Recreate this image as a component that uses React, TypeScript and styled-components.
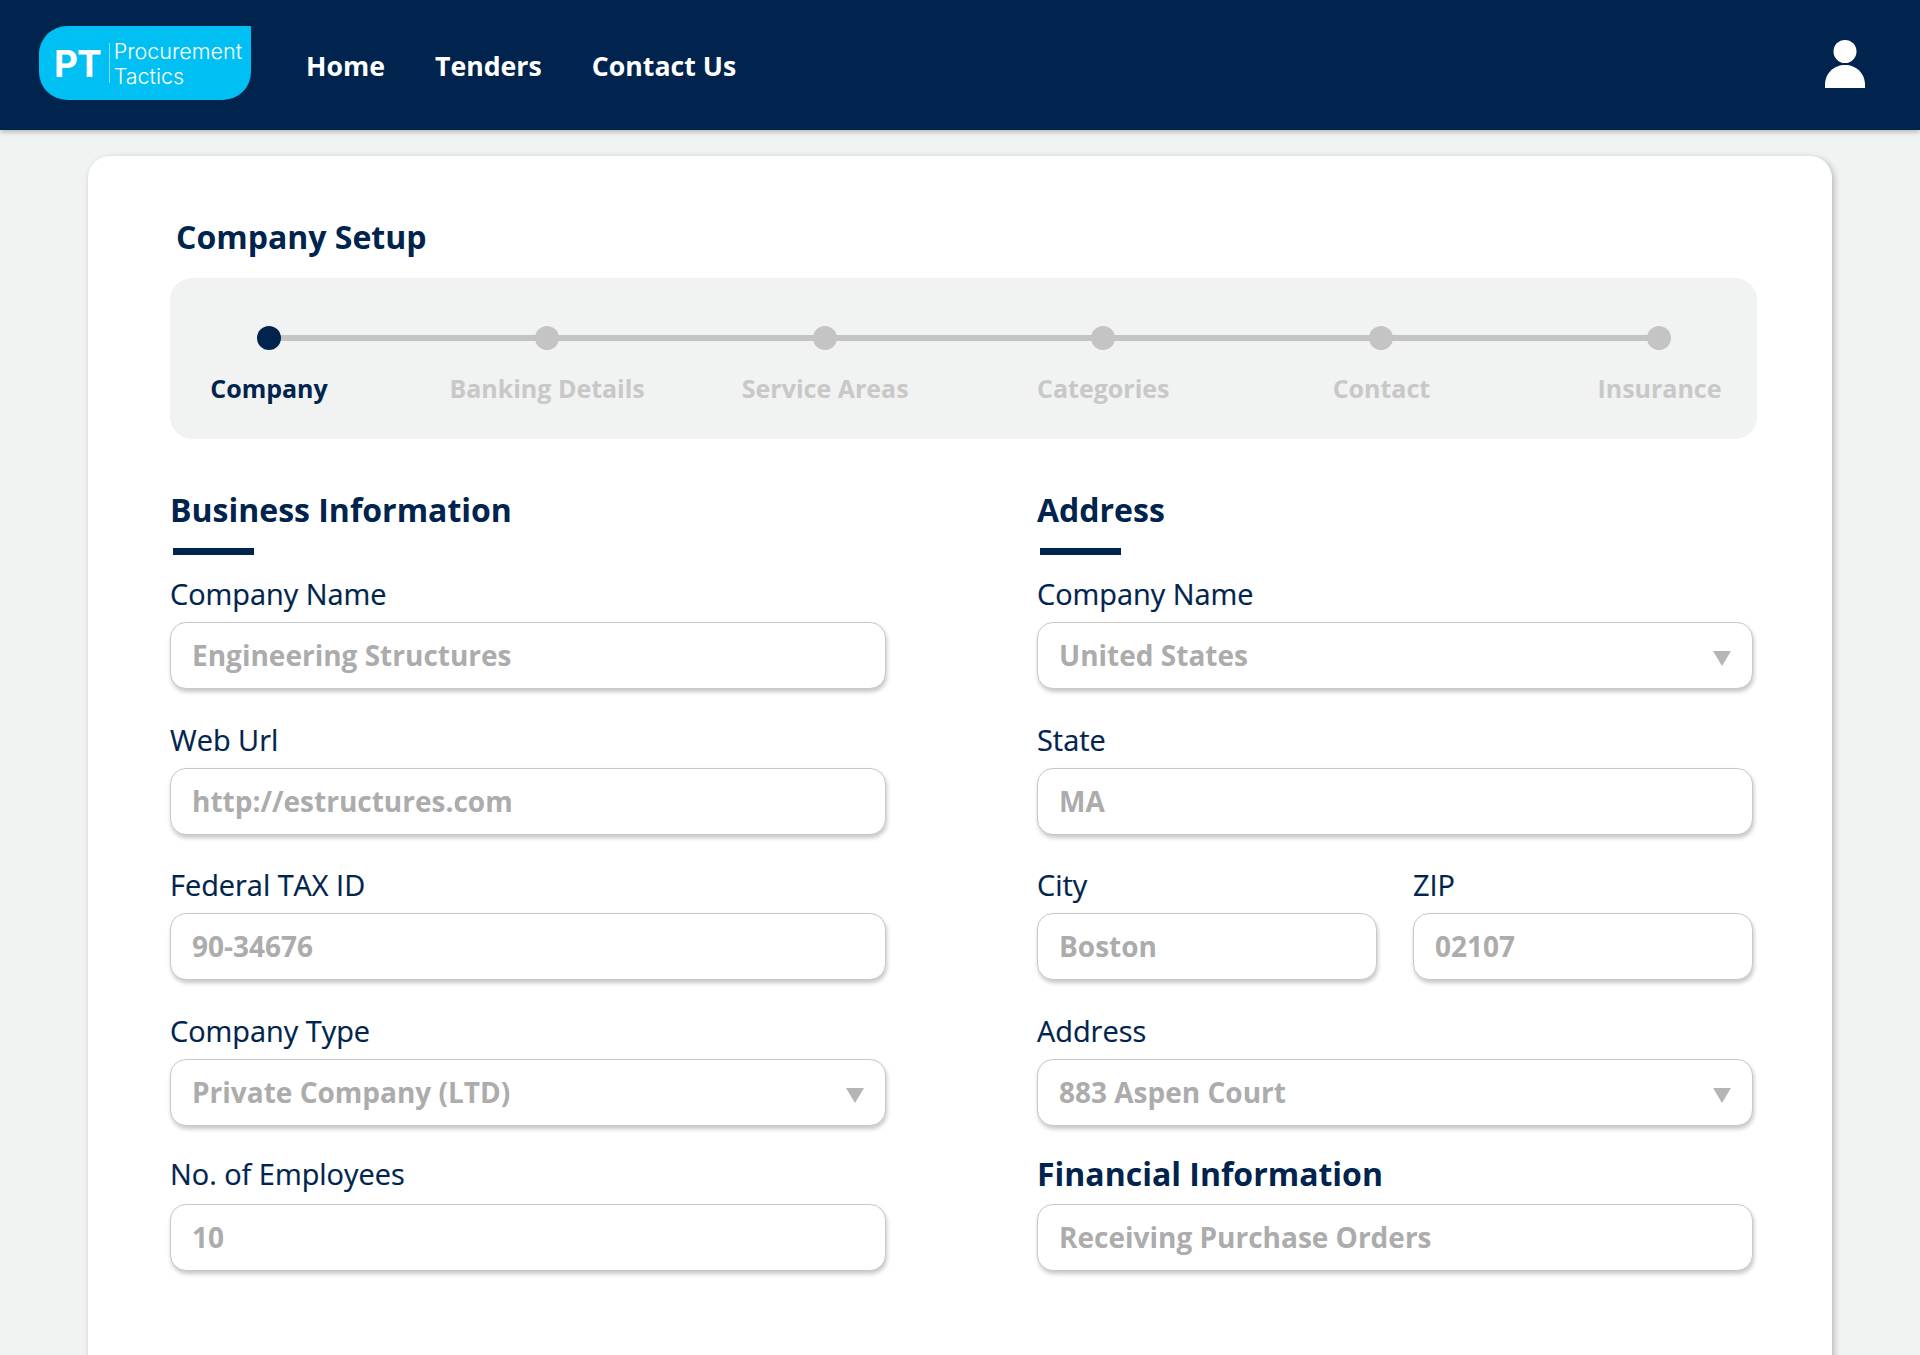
import styled, { createGlobalStyle } from "styled-components";

const NAVY = "#00244d";

const GlobalStyle = createGlobalStyle`
  * {
    box-sizing: border-box;
  }
  html, body {
    margin: 0;
    padding: 0;
    height: 100%;
    background: #f1f2f2;
    font-family: "Open Sans", "Liberation Sans", sans-serif;
  }
  #root {
    height: 1355px;
    overflow: hidden;
  }
`;

const steps = ["Company", "Banking Details", "Service Areas", "Categories", "Contact", "Insurance"];

const App = () => {
  return (
    <>
      <GlobalStyle />
      <Header>
        <Logo>
          <LogoMark>PT</LogoMark>
          <LogoDivider />
          <LogoName>
            <span>Procurement</span>
            <span>Tactics</span>
          </LogoName>
        </Logo>
        <Nav>
          <NavLink>Home</NavLink>
          <NavLink>Tenders</NavLink>
          <NavLink>Contact Us</NavLink>
        </Nav>
        <UserIcon viewBox="0 0 40 48" aria-hidden="true">
          <circle cx="20" cy="11.5" r="11.5" fill="#fff" />
          <path d="M0 48 V45 C0 33 9 25 20 25 C31 25 40 33 40 45 V48 Z" fill="#fff" />
        </UserIcon>
      </Header>
      <Card>
        <Title>Company Setup</Title>
        <StepPanel>
          <StepRow>
            {steps.map((step, i) => (
              <Step key={step}>
                <Dot active={i === 0} />
                <StepLabel active={i === 0}>{step}</StepLabel>
              </Step>
            ))}
          </StepRow>
        </StepPanel>
        <Columns>
          <Column>
            <SectionTitle>Business Information</SectionTitle>
            <SectionBar />
            <Fields>
              <Field>
                <Label>Company Name</Label>
                <InputBox>Engineering Structures</InputBox>
              </Field>
              <Field>
                <Label>Web Url</Label>
                <InputBox>http://estructures.com</InputBox>
              </Field>
              <Field>
                <Label>Federal TAX ID</Label>
                <InputBox>90-34676</InputBox>
              </Field>
              <Field>
                <Label>Company Type</Label>
                <InputBox>
                  Private Company (LTD)
                  <Caret />
                </InputBox>
              </Field>
              <Field>
                <Label tight>No. of Employees</Label>
                <InputBox>10</InputBox>
              </Field>
            </Fields>
          </Column>
          <Column>
            <SectionTitle>Address</SectionTitle>
            <SectionBar />
            <Fields>
              <Field>
                <Label>Company Name</Label>
                <InputBox>
                  United States
                  <Caret />
                </InputBox>
              </Field>
              <Field>
                <Label>State</Label>
                <InputBox>MA</InputBox>
              </Field>
              <SplitRow>
                <Field>
                  <Label>City</Label>
                  <InputBox>Boston</InputBox>
                </Field>
                <Field>
                  <Label>ZIP</Label>
                  <InputBox>02107</InputBox>
                </Field>
              </SplitRow>
              <Field>
                <Label>Address</Label>
                <InputBox>
                  883 Aspen Court
                  <Caret />
                </InputBox>
              </Field>
              <Field>
                <FieldHeading>Financial Information</FieldHeading>
                <InputBox>Receiving Purchase Orders</InputBox>
              </Field>
            </Fields>
          </Column>
        </Columns>
      </Card>
    </>
  );
};

export default App;

const Header = styled.header`
  display: flex;
  align-items: center;
  height: 130px;
  padding: 0 55px 0 39px;
  background: ${NAVY};
  box-shadow: 0 2px 5px rgba(0, 0, 0, 0.25);
  position: relative;
`;

const Logo = styled.div`
  display: flex;
  align-items: center;
  width: 212px;
  height: 74px;
  margin-top: -4px;
  padding-left: 15px;
  background: #00c0f3;
  border-radius: 28px 0 28px 28px;
  color: #fff;
`;

const LogoMark = styled.span`
  font-family: "Inter", sans-serif;
  font-size: 37px;
  font-weight: 700;
  line-height: 1;
  letter-spacing: -1px;
`;

const LogoDivider = styled.span`
  width: 1px;
  height: 40px;
  margin: 0 4px 0 8px;
  background: rgba(255, 255, 255, 0.5);
`;

const LogoName = styled.span`
  display: flex;
  flex-direction: column;
  margin-top: 2px;
  font-family: "Inter", sans-serif;
  font-size: 21.5px;
  font-weight: 300;
  line-height: 25px;
  white-space: nowrap;
`;

const Nav = styled.nav`
  display: flex;
  gap: 50px;
  margin-left: 55px;
  margin-top: 2px;
`;

const NavLink = styled.a`
  color: #fff;
  font-size: 26.7px;
  font-weight: 700;
  line-height: 36px;
`;

const UserIcon = styled.svg`
  width: 40px;
  height: 48px;
  margin-left: auto;
  margin-top: -2px;
`;

const Card = styled.main`
  width: 1744px;
  height: 1300px;
  margin: 26px 0 0 88px;
  padding: 59px 75px 0 82px;
  background: #fff;
  border-radius: 22px;
  box-shadow: 2px 2px 6px rgba(0, 0, 0, 0.25);
`;

const Title = styled.h1`
  margin: 0 0 19px 6px;
  color: ${NAVY};
  font-size: 32px;
  font-weight: 700;
  line-height: 44px;
`;

const StepPanel = styled.section`
  height: 161px;
  padding-top: 48px;
  background: #f1f2f2;
  border-radius: 22px;
`;

const StepRow = styled.div`
  position: relative;
  display: flex;
  justify-content: space-between;
  margin-right: -1.5px;

  &::before {
    content: "";
    position: absolute;
    top: 9px;
    left: 99px;
    right: 99px;
    height: 6px;
    background: #c4c4c4;
  }
`;

const Step = styled.div`
  position: relative;
  display: flex;
  flex-direction: column;
  align-items: center;
  gap: 20px;
  width: 198px;
`;

const Dot = styled.span<{ active: boolean }>`
  width: 24px;
  height: 24px;
  border-radius: 50%;
  background: ${(props) => (props.active ? NAVY : "#c4c4c4")};
`;

const StepLabel = styled.span<{ active: boolean }>`
  color: ${(props) => (props.active ? NAVY : "#c8c8c8")};
  font-size: 25px;
  font-weight: 700;
  line-height: 36px;
  white-space: nowrap;
`;

const Columns = styled.div`
  display: grid;
  grid-template-columns: 716px 716px;
  column-gap: 151px;
  margin-top: 48px;
`;

const Column = styled.section`
  display: flex;
  flex-direction: column;
`;

const SectionTitle = styled.h2`
  margin: 0;
  color: ${NAVY};
  font-size: 32px;
  font-weight: 700;
  line-height: 46px;
`;

const SectionBar = styled.div`
  width: 81px;
  height: 7px;
  margin: 15px 0 19px 3px;
  background: ${NAVY};
`;

const Fields = styled.div`
  display: flex;
  flex-direction: column;
  gap: 30.5px;
`;

const Field = styled.div`
  display: flex;
  flex-direction: column;
  min-width: 0;
  flex: 1;
`;

const Label = styled.label<{ tight?: boolean }>`
  height: 40px;
  margin-top: ${(props) => (props.tight ? "-2px" : "0")};
  margin-bottom: ${(props) => (props.tight ? "10px" : "8px")};
  color: ${NAVY};
  font-size: 28.9px;
  font-weight: 500;
  line-height: 40px;
  -webkit-text-stroke: 0.2px ${NAVY};
`;

const FieldHeading = styled.h2`
  height: 40px;
  margin: -2px 0 10px;
  color: ${NAVY};
  font-size: 32px;
  font-weight: 700;
  line-height: 40px;
`;

const SplitRow = styled.div`
  display: flex;
  gap: 36px;
`;

const InputBox = styled.div`
  position: relative;
  height: 67px;
  padding: 0 21px;
  background: #fff;
  border: 1.5px solid #c8c8c8;
  border-radius: 16px;
  box-shadow: 1px 3px 4px rgba(0, 0, 0, 0.22);
  color: #acacac;
  font-size: 28px;
  font-weight: 700;
  line-height: 64px;
`;

const Caret = styled.span`
  position: absolute;
  top: 28px;
  right: 21.5px;
  width: 0;
  height: 0;
  border-left: 9.5px solid transparent;
  border-right: 9.5px solid transparent;
  border-top: 15px solid #b5b5b5;
`;
